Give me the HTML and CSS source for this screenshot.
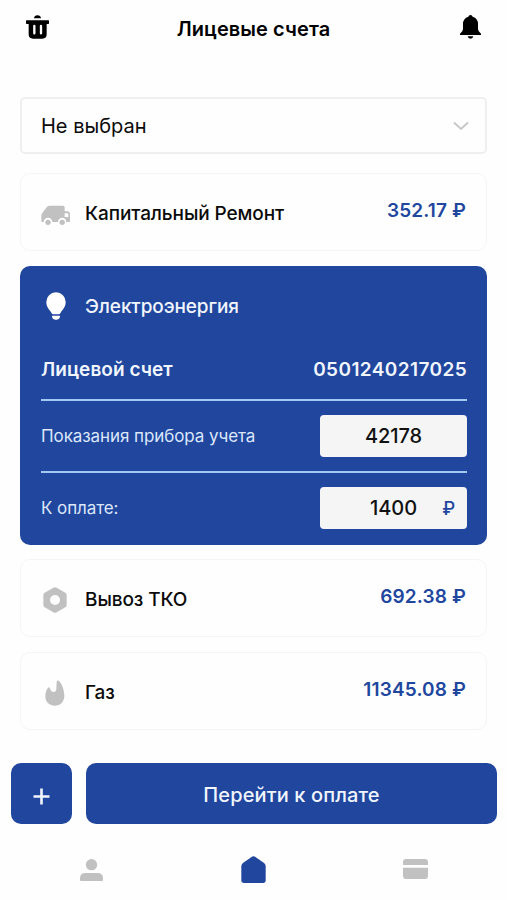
FILE: index.html
```html
<!DOCTYPE html>
<html lang="ru">
<head>
    <meta charset="UTF-8">
    <meta name="viewport" content="width=device-width, initial-scale=1.0">
    <title>Лицевые счета</title>
    <link rel="stylesheet" href="styles.css">
</head>
<body>

    <header class="top-bar">
        <svg class="icon-trash" viewBox="0 0 69 72">
            <path d="M24 10Q25 1 34.500 1Q44 1 45 10Z" fill="currentColor"/>
            <path d="M2 16H67Q69 16 69 18V25Q69 27 67 27H62V58Q62 71 49 71H21Q8 71 8 58V27H2Q0 27 0 25V18Q0 16 2 16Z" fill="currentColor"/>
            <path d="M25 33V55M45 33V55" fill="none" stroke="#fff" stroke-width="7" stroke-linecap="round"/>
            <path d="M35 33V55" fill="none" stroke="currentColor" stroke-width="5"/>
        </svg>
        <h1>Лицевые счета</h1>
        <svg class="icon-bell" viewBox="0 0 63 72">
            <path d="M31.500 0Q37 0 38 5Q54 10 54 27V43Q54 48 63 56V60H0V56Q9 48 9 43V27Q9 10 25 5Q26 0 31.500 0Z" fill="currentColor"/>
            <path d="M23 64H40Q39 71 31.500 71Q24 71 23 64Z" fill="currentColor"/>
        </svg>
    </header>

    <main class="accounts">
        <div class="select">
            <span>Не выбран</span>
            <svg viewBox="0 0 16 10">
                <path d="M1 1.500L8 8L15 1.500" fill="none" stroke="currentColor" stroke-width="2"/>
            </svg>
        </div>

        <section class="card">
            <div class="card-icon">
                <svg class="icon-truck" viewBox="0 0 87 60">
                    <path fill-rule="evenodd" d="M25 2H66Q71 2 71 7V19H79Q87 19 87 28V49Q87 51 85 51H76A12 12 0 0 0 51 51H34A12 12 0 0 0 8 51H3Q1 51 1 48V32Q1 28 4 24L17 7Q20 2 25 2ZM71 25V36H82V28Q82 25 79 25Z" fill="currentColor"/>
                    <circle cx="21" cy="52" r="8" fill="currentColor"/>
                    <circle cx="63.500" cy="52" r="8" fill="currentColor"/>
                </svg>
            </div>
            <h2>Капитальный Ремонт</h2>
            <span class="price">352.17 ₽</span>
        </section>

        <section class="card-active">
            <div class="card-head">
                <div class="card-icon">
                    <svg class="icon-bulb" viewBox="0 0 60 84">
                        <path d="M30 1A29 29 0 0 1 59 31C59 46 49 54 44 62Q42 67 37 67H23Q18 67 16 62C11 54 1 46 1 31A29 29 0 0 1 30 1Z" fill="currentColor"/>
                        <path d="M18 71H42V75Q40 83 32 83H28Q20 83 18 75Z" fill="currentColor"/>
                    </svg>
                </div>
                <h2>Электроэнергия</h2>
            </div>
            <div class="row row-account">
                <span>Лицевой счет</span>
                <span class="account-number">0501240217025</span>
            </div>
            <div class="row">
                <span>Показания прибора учета</span>
                <div class="field">42178</div>
            </div>
            <div class="row">
                <span>К оплате:</span>
                <div class="field">1400<span class="currency">₽</span></div>
            </div>
        </section>

        <section class="card">
            <div class="card-icon">
                <svg class="icon-nut" viewBox="0 0 72 78">
                    <path fill-rule="evenodd" d="M31 2Q36 -1 41 2L67 17Q71 19 71 24V54Q71 59 67 61L41 76Q36 79 31 76L5 61Q1 59 1 54V24Q1 19 5 17ZM36 24A15 15 0 1 0 36 54A15 15 0 1 0 36 24Z" fill="currentColor"/>
                </svg>
            </div>
            <h2>Вывоз ТКО</h2>
            <span class="price">692.38 ₽</span>
        </section>

        <section class="card">
            <div class="card-icon">
                <svg class="icon-fire" viewBox="0 0 60 78">
                    <path d="M35 5Q36 0 41 2C51 10 58 30 58 47C58 65 46 77 29 77C12 77 1 65 1 49C1 39 4 29 9 23Q13 20 15 26Q18 35 24 36Q33 37 34 27Z" fill="currentColor"/>
                </svg>
            </div>
            <h2>Газ</h2>
            <span class="price">11345.08 ₽</span>
        </section>
    </main>

    <div class="actions">
        <button class="btn btn-add" aria-label="Добавить">
            <svg viewBox="0 0 17 17">
                <path d="M8.500 0.500V16.500M0.500 8.500H16.500" stroke="currentColor" stroke-width="2.600"/>
            </svg>
        </button>
        <button class="btn btn-pay">Перейти к оплате</button>
    </div>

    <nav class="tab-bar">
        <a class="tab">
            <svg class="icon-user" viewBox="0 0 69 66">
                <circle cx="34.500" cy="17" r="17" fill="currentColor"/>
                <path d="M17 42H52Q69 42 69 58V63Q69 66 66 66H3Q0 66 0 63V58Q0 42 17 42Z" fill="currentColor"/>
            </svg>
        </a>
        <a class="tab active">
            <svg class="icon-home" viewBox="0 0 74 82">
                <path d="M31 3Q37 -1 43 3L69 21Q74 25 74 31V74Q74 82 66 82H8Q0 82 0 74V31Q0 25 5 21Z" fill="currentColor"/>
            </svg>
        </a>
        <a class="tab">
            <svg class="icon-card" viewBox="0 0 75 60">
                <path d="M10 0H65Q75 0 75 10V18H0V10Q0 0 10 0ZM0 26H75V50Q75 60 65 60H10Q0 60 0 50Z" fill="currentColor"/>
            </svg>
        </a>
    </nav>

</body>
</html>
```
FILE: styles.css
```css
:root {
    --blue: #20469e;
    --grey: #c1c1c1;
    --line: #a5c8f5;
    --field-bg: #f5f5f5;
}

*, *::before, *::after {
    box-sizing: border-box;
    margin: 0;
    padding: 0;
}

body {
    font-family: Inter, "Liberation Sans", sans-serif;
    background: #fefefe;
    color: #0b0b0b;
    height: 900px;
    overflow: hidden;
}

svg {
    display: block;
    flex-shrink: 0;
}

.top-bar {
    display: flex;
    justify-content: space-between;
    align-items: center;
    height: 54px;
    padding: 0 26px;
    color: #000;
}

.top-bar h1 {
    font-size: 20px;
    font-weight: 600;
    line-height: 24px;
    letter-spacing: 0.08px;
    padding: 4px 2px 0 0;
}

.icon-trash {
    width: 23px;
    height: 24px;
}

.icon-bell {
    width: 21px;
    height: 24px;
}

.accounts {
    padding: 43px 20px 0;
}

.select {
    display: flex;
    justify-content: space-between;
    align-items: center;
    height: 57px;
    margin-bottom: 19px;
    padding: 0 16px 0 19px;
    border: 2px solid #efefef;
    border-radius: 5px;
    font-size: 20px;
}

.select svg {
    width: 16px;
    height: 10px;
    color: #c8c8c8;
}

.card {
    display: flex;
    align-items: center;
    height: 78px;
    margin-bottom: 15px;
    padding: 3px 20px 0 19px;
    border: 1px solid #f5f5f5;
    border-radius: 10px;
}

.card-icon {
    display: flex;
    justify-content: center;
    width: 30px;
    margin-right: 15px;
    color: var(--grey);
}

.icon-truck {
    width: 29px;
    height: 20px;
    margin-top: 2px;
}

.icon-bulb {
    width: 20px;
    height: 28px;
}

.icon-nut {
    width: 24px;
    height: 26px;
}

.icon-fire {
    width: 20px;
    height: 26px;
}

h2 {
    font-size: 19px;
    font-weight: 500;
    line-height: 24px;
    letter-spacing: -0.1px;
    padding-top: 1px;
}

.price {
    margin-left: auto;
    padding-bottom: 5px;
    font-size: 19px;
    font-weight: 600;
    line-height: 24px;
    letter-spacing: 0.15px;
    color: var(--blue);
}

.card-active {
    height: 279px;
    margin-bottom: 14px;
    padding: 26px 20px 0 21px;
    border-radius: 10px;
    background: var(--blue);
    color: #f1f5fd;
}

.card-head {
    display: flex;
    align-items: center;
    height: 28px;
    margin-bottom: 20px;
}

.card-head .card-icon {
    width: 29px;
    color: #fff;
}

.row {
    display: flex;
    justify-content: space-between;
    align-items: center;
    height: 72px;
    border-bottom: 2px solid var(--line);
    font-size: 17px;
    letter-spacing: -0.08px;
    color: #dce7fa;
}

.row:last-child {
    border-bottom-color: transparent;
}

.row-account {
    height: 61px;
    font-size: 19px;
    font-weight: 600;
    letter-spacing: 0.05px;
    color: #f1f5fd;
}

.account-number {
    letter-spacing: 0.4px;
}

.field {
    display: flex;
    position: relative;
    align-items: center;
    justify-content: center;
    width: 147px;
    height: 42px;
    border-radius: 4px;
    background: var(--field-bg);
    font-size: 20px;
    font-weight: 500;
    color: #111;
}

.currency {
    position: absolute;
    right: 12px;
    font-size: 18px;
    color: var(--blue);
}

.actions {
    display: flex;
    gap: 14px;
    padding: 18px 10px 0 11px;
}

.btn {
    display: flex;
    align-items: center;
    justify-content: center;
    height: 61px;
    border: none;
    border-radius: 10px;
    background: var(--blue);
    color: #f1f5fd;
    font-family: inherit;
    font-size: 20px;
    font-weight: 500;
}

.btn-add {
    width: 61px;
    padding-top: 5px;
}

.btn-add svg {
    width: 17px;
    height: 17px;
}

.btn-pay {
    flex: 1;
    padding-top: 2px;
    letter-spacing: 0.12px;
}

.tab-bar {
    display: flex;
    align-items: center;
    height: 92px;
    padding: 0 10px;
}

.tab {
    display: flex;
    flex: 1;
    justify-content: center;
    color: var(--grey);
}

.tab.active {
    color: var(--blue);
}

.icon-user {
    width: 23px;
    height: 22px;
}

.icon-home {
    width: 25px;
    height: 27px;
    margin-bottom: 2px;
}

.icon-card {
    width: 25px;
    height: 20px;
    margin-bottom: 2px;
}
```
